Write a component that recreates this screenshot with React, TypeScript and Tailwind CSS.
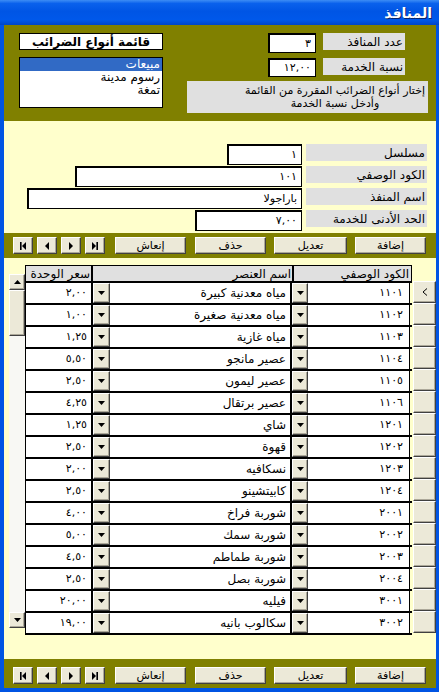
import React from "react";

type Row = { code: string; name: string; price: string };

const rows: Row[] = [
  { code: "١١٠١", name: "مياه معدنية كبيرة", price: "٢,٠٠" },
  { code: "١١٠٢", name: "مياه معدنية صغيرة", price: "١,٠٠" },
  { code: "١١٠٣", name: "مياه غازية", price: "١,٢٥" },
  { code: "١١٠٤", name: "عصير مانجو", price: "٥,٥٠" },
  { code: "١١٠٥", name: "عصير ليمون", price: "٢,٥٠" },
  { code: "١١٠٦", name: "عصير برتقال", price: "٤,٢٥" },
  { code: "١٢٠١", name: "شاي", price: "١,٢٥" },
  { code: "١٢٠٢", name: "قهوة", price: "٢,٥٠" },
  { code: "١٢٠٣", name: "نسكافيه", price: "٢,٠٠" },
  { code: "١٢٠٤", name: "كابيتشينو", price: "٢,٥٠" },
  { code: "٢٠٠١", name: "شوربة فراخ", price: "٤,٠٠" },
  { code: "٢٠٠٢", name: "شوربة سمك", price: "٥,٠٠" },
  { code: "٢٠٠٣", name: "شوربة طماطم", price: "٤,٥٠" },
  { code: "٢٠٠٤", name: "شوربة بصل", price: "٢,٥٠" },
  { code: "٣٠٠١", name: "فيليه", price: "٢٠,٠٠" },
  { code: "٣٠٠٢", name: "سكالوب بانيه", price: "١٩,٠٠" },
];

const raised =
  "bg-[#ece9d8] border border-t-white border-l-white border-r-[#404040] border-b-[#404040] shadow-[inset_-1px_-1px_0_#aca899]";

function DownTri() {
  return (
    <svg width="7" height="4" viewBox="0 0 7 4">
      <path d="M0 0h7L3.5 4z" fill="#000" />
    </svg>
  );
}

function NavIcon({ kind }: { kind: "first" | "prev" | "next" | "last" }) {
  return (
    <svg width="8" height="8" viewBox="0 0 8 8">
      {kind === "first" && (
        <>
          <rect x="1" y="0" width="1.6" height="8" fill="#000" />
          <path d="M7 0v8L3 4z" fill="#000" />
        </>
      )}
      {kind === "prev" && <path d="M6 0v8L2 4z" fill="#000" />}
      {kind === "next" && <path d="M2 0v8l4-4z" fill="#000" />}
      {kind === "last" && (
        <>
          <path d="M1 0v8l4-4z" fill="#000" />
          <rect x="5.4" y="0" width="1.6" height="8" fill="#000" />
        </>
      )}
    </svg>
  );
}

function Btn({ w, children }: { w: string; children: React.ReactNode }) {
  return (
    <div className={`${raised} ${w} h-[17px] flex items-center justify-center text-[11px] leading-none`} dir="rtl">
      {children}
    </div>
  );
}

function NavBar({ top }: { top: string }) {
  return (
    <div className={`bg-[#808000] flex items-start ${top}`}>
      <div className="ml-[9px] flex gap-[4px]">
        <Btn w="w-[20px]"><NavIcon kind="first" /></Btn>
        <Btn w="w-[20px]"><NavIcon kind="prev" /></Btn>
        <Btn w="w-[20px]"><NavIcon kind="next" /></Btn>
        <Btn w="w-[20px]"><NavIcon kind="last" /></Btn>
      </div>
      <div className="ml-[10px]"><Btn w="w-[71px]">إنعاش</Btn></div>
      <div className="ml-[9px]"><Btn w="w-[71px]">حذف</Btn></div>
      <div className="ml-[8px]"><Btn w="w-[73px]">تعديل</Btn></div>
      <div className="ml-[8px]"><Btn w="w-[71px]">إضافة</Btn></div>
    </div>
  );
}

function TextBox({ w, h, children }: { w: string; h: string; children?: React.ReactNode }) {
  return (
    <div
      dir="rtl"
      className={`${w} ${h} bg-white border border-black shadow-[inset_1px_1px_0_#000] flex items-center justify-start pr-[4px] text-[11px] leading-none whitespace-nowrap overflow-hidden`}
    >
      {children}
    </div>
  );
}

function Label({ w, children }: { w: string; children: React.ReactNode }) {
  return (
    <div dir="rtl" className={`${w} h-[17px] bg-[#e0e0e0] flex items-center pr-[2px] text-[12px] leading-none whitespace-nowrap`}>
      {children}
    </div>
  );
}

function TitleBar() {
  return (
    <div className="h-[25px] bg-[linear-gradient(to_bottom,#3d8df5_0%,#0a61ec_14%,#0055e5_45%,#0058ea_80%,#0046c8_100%)] flex items-center justify-end pr-[7px]">
      <span dir="rtl" className="text-white font-bold text-[14px] leading-none [text-shadow:1px_1px_0_#0a246a]">
        المنافذ
      </span>
    </div>
  );
}

function Header() {
  return (
    <div className="h-[96px] bg-[#808000] flex">
      <div className="ml-[15px] mt-[8px] w-[144px] flex flex-col">
        <div dir="rtl" className="h-[17px] bg-white border border-black flex items-center justify-center font-bold text-[12px] leading-none">
          قائمة أنواع الضرائب
        </div>
        <div dir="rtl" className="mt-[7px] h-[51px] bg-white border border-black flex flex-col text-[12px] leading-[13px]">
          <div className="bg-[#316ac5] text-white pr-[2px]">مبيعات</div>
          <div className="pr-[2px]">رسوم مدينة</div>
          <div className="pr-[2px]">تمغة</div>
        </div>
      </div>
      <div className="ml-auto mr-[8px] mt-[8px] w-[241px] flex flex-col">
        <div className="flex justify-end gap-[7px] pr-[23px]">
          <TextBox w="w-[48px]" h="h-[20px]">٣</TextBox>
          <Label w="w-[82px]">عدد المنافذ</Label>
        </div>
        <div className="mt-[5px] flex justify-end gap-[7px] pr-[23px]">
          <TextBox w="w-[48px]" h="h-[19px]">١٢,٠٠</TextBox>
          <Label w="w-[82px]">نسبة الخدمة</Label>
        </div>
        <div className="mt-[4px] h-[32px] bg-[#e0e0e0] flex justify-end items-center pr-[3px]">
          <div dir="rtl" className="text-center text-[11px] leading-[13px]">
            <div>إختار أنواع الضرائب المقررة من القائمة</div>
            <div>وأدخل نسبة الخدمة</div>
          </div>
        </div>
      </div>
    </div>
  );
}

function Details() {
  const items: { label: string; value: string; w: string }[] = [
    { label: "مسلسل", value: "١", w: "w-[75px]" },
    { label: "الكود الوصفي", value: "١٠١", w: "w-[227px]" },
    { label: "اسم المنفذ", value: "باراجولا", w: "w-[275px]" },
    { label: "الحد الأدنى للخدمة", value: "٧,٠٠", w: "w-[107px]" },
  ];
  return (
    <div className="h-[112px] pt-[23px] pr-[9px] flex flex-col items-end">
      {items.map((it) => (
        <div key={it.label} className="h-[22px] flex items-start gap-[4px]">
          <TextBox w={it.w} h="h-[21px]">{it.value}</TextBox>
          <Label w="w-[121px]">{it.label}</Label>
        </div>
      ))}
    </div>
  );
}

function ScrollBar() {
  return (
    <div className="ml-[5px] mt-[9px] w-[16px] h-[354px] flex flex-col bg-[#f8f8f4]">
      <div className={`${raised} h-[16px] flex items-center justify-center`}>
        <svg width="7" height="4" viewBox="0 0 7 4"><path d="M0 4h7L3.5 0z" fill="#000" /></svg>
      </div>
      <div className={`${raised} h-[46px]`} />
      <div className="flex-1" />
      <div className={`${raised} h-[16px] flex items-center justify-center`}>
        <DownTri />
      </div>
    </div>
  );
}

function Grid() {
  return (
    <div className="w-[387px] flex flex-col text-[11px]" dir="ltr">
      <div className="h-[16px] flex bg-[#e0e0e0] border-t border-black text-[12px] leading-none">
        <div dir="rtl" className="w-[68px] border-l border-r-2 border-black flex items-center pr-[1px]">سعر الوحدة</div>
        <div dir="rtl" className="w-[201px] border-r-2 border-black flex items-center pr-[1px]">اسم العنصر</div>
        <div dir="rtl" className="w-[118px] border-r border-black flex items-center pr-[2px]">الكود الوصفي</div>
      </div>
      {rows.map((r, i) => (
        <div
          key={r.code}
          className={`h-[22px] flex border-t-2 border-black ${i === rows.length - 1 ? "h-[24px] border-b-2" : ""}`}
        >
          <div dir="rtl" className="w-[68px] bg-white border-l border-r-2 border-black flex items-center pr-[4px]">
            {r.price}
          </div>
          <div className={`${raised} w-[17px] flex items-center justify-center`}>
            <DownTri />
          </div>
          <div dir="rtl" className="w-[182px] bg-white border-r-2 border-black flex items-center pr-[4px] text-[12px] whitespace-nowrap overflow-hidden">
            {r.name}
          </div>
          <div className={`${raised} w-[16px] flex items-center justify-center`}>
            <DownTri />
          </div>
          <div dir="rtl" className="w-[102px] bg-white border-r border-black flex items-center pr-[6px]">
            {r.code}
          </div>
        </div>
      ))}
    </div>
  );
}

function Selectors() {
  return (
    <div className="ml-[1px] w-[23px] flex flex-col">
      <div className="h-[16px]" />
      {rows.map((r, i) => (
        <div key={r.code} className={`${raised} h-[22px] flex items-center justify-center`}>
          {i === 0 && (
            <svg width="6" height="8" viewBox="0 0 6 8">
              <path d="M5 0.5L1 4l4 3.5" stroke="#000" strokeWidth="1" fill="none" />
            </svg>
          )}
        </div>
      ))}
    </div>
  );
}

export default function App() {
  return (
    <div className="w-[439px] h-[692px] bg-[#0054e3] flex flex-col font-['DejaVu_Sans',sans-serif] text-black">
      <TitleBar />
      <div className="flex-1 ml-[4px] mr-[3px] mb-[4px] bg-[#ffffcc] flex flex-col">
        <Header />
        <Details />
        <NavBar top="h-[25px] pt-[4px]" />
        <div className="flex-1 pt-[7px] flex items-start">
          <ScrollBar />
          <Grid />
          <Selectors />
        </div>
        <NavBar top="h-[29px] pt-[8px]" />
      </div>
    </div>
  );
}
